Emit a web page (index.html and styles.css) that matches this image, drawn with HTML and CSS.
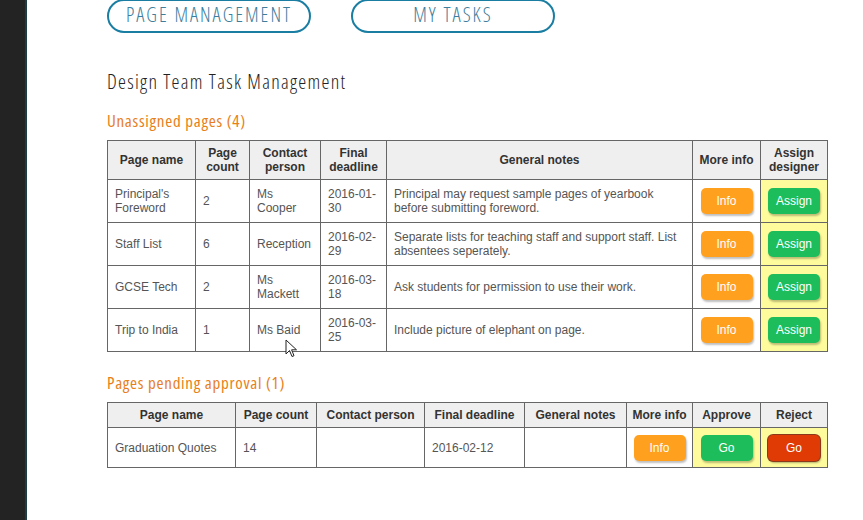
FILE: index.html
```html
<!DOCTYPE html>
<html>
<head>
<meta charset="utf-8">
<link rel="stylesheet" href="styles.css">
</head>
<body>
<div class="sidebar"></div>
<main class="main">
  <nav class="nav">
    <a class="pill">PAGE MANAGEMENT</a>
    <a class="pill">MY TASKS</a>
  </nav>
  <h1 class="title">Design Team Task Management</h1>
  <h2 class="section">Unassigned pages (4)</h2>
  <table class="grid t1">
    <colgroup>
      <col style="width:88px"><col style="width:54px"><col style="width:71px"><col style="width:66px"><col style="width:306px"><col style="width:68px"><col style="width:67px">
    </colgroup>
    <thead>
      <tr><th>Page name</th><th>Page<br>count</th><th>Contact<br>person</th><th>Final<br>deadline</th><th>General notes</th><th>More info</th><th>Assign<br>designer</th></tr>
    </thead>
    <tbody>
      <tr><td>Principal's Foreword</td><td>2</td><td>Ms Cooper</td><td>2016-01-30</td><td>Principal may request sample pages of yearbook before submitting foreword.</td><td class="c"><span class="btn info">Info</span></td><td class="c hl"><span class="btn green">Assign</span></td></tr>
      <tr><td>Staff List</td><td>6</td><td>Reception</td><td>2016-02-29</td><td>Separate lists for teaching staff and support staff. List absentees seperately.</td><td class="c"><span class="btn info">Info</span></td><td class="c hl"><span class="btn green">Assign</span></td></tr>
      <tr><td>GCSE Tech</td><td>2</td><td>Ms Mackett</td><td>2016-03-18</td><td>Ask students for permission to use their work.</td><td class="c"><span class="btn info">Info</span></td><td class="c hl"><span class="btn green">Assign</span></td></tr>
      <tr><td>Trip to India</td><td>1</td><td>Ms Baid</td><td>2016-03-25</td><td>Include picture of elephant on page.</td><td class="c"><span class="btn info">Info</span></td><td class="c hl"><span class="btn green">Assign</span></td></tr>
    </tbody>
  </table>
  <h2 class="section s2">Pages pending approval (1)</h2>
  <table class="grid t2">
    <colgroup>
      <col style="width:128px"><col style="width:81px"><col style="width:108px"><col style="width:100px"><col style="width:102px"><col style="width:66px"><col style="width:68px"><col style="width:67px">
    </colgroup>
    <thead>
      <tr><th>Page name</th><th>Page count</th><th>Contact person</th><th>Final deadline</th><th>General notes</th><th>More info</th><th>Approve</th><th>Reject</th></tr>
    </thead>
    <tbody>
      <tr><td>Graduation Quotes</td><td>14</td><td></td><td>2016-02-12</td><td></td><td class="c"><span class="btn info">Info</span></td><td class="c hl"><span class="btn green">Go</span></td><td class="c hl"><span class="btn red">Go</span></td></tr>
    </tbody>
  </table>
  <svg class="cursor" width="14" height="20" viewBox="0 0 14 20"><path d="M1 1 L1 15 L4.5 11.5 L7 17.5 L9 16.7 L6.6 10.8 L11.5 10.8 Z" fill="#fff" stroke="#222" stroke-width="1"/></svg>
</main>
</body>
</html>
```
FILE: styles.css
```css
html, body { margin: 0; padding: 0; background: #fff; }
body { display: flex; min-height: 520px; font-family: "Liberation Sans", Arial, sans-serif; }
.sidebar { width: 25px; background: #232323; border-right: 2px solid #1c3d48; flex: none; }
.main { position: relative; padding-left: 80px; flex: 1; }
.nav { display: flex; gap: 40px; }
.pill {
  box-sizing: border-box; width: 204px; height: 34px; padding-bottom: 3px;
  border: 2px solid #1a7ea3; border-radius: 17px;
  display: flex; align-items: center; justify-content: center;
  font-family: "Open Sans", Roboto, sans-serif; font-stretch: 75%; font-weight: 300;
  font-size: 20px; letter-spacing: 2px; color: #3d7e9c; white-space: nowrap;
  margin-top: -1px;
}
.title {
  margin: 37px 0 0; font-weight: 300; font-size: 20px; color: #222;
  font-family: "Open Sans", Roboto, sans-serif; font-stretch: 75%;
  letter-spacing: 1.3px; line-height: 24px; white-space: nowrap;
}
.section {
  margin: 17px 0 0; font-weight: 400; font-size: 17px; color: #e8801a;
  font-family: "Open Sans", Roboto, sans-serif; font-stretch: 75%;
  letter-spacing: 0.7px; line-height: 20px; white-space: nowrap;
}
.s2 { margin-top: 21px; }
.grid { border-collapse: collapse; table-layout: fixed; width: 720px; font-size: 12px; color: #555; margin-top: 9px; }
.grid th, .grid td { border: 1px solid #666; padding: 0 7px; line-height: 14px; }
.grid th { background: #efefef; color: #333; font-weight: bold; text-align: center; padding: 0 3px; white-space: nowrap; }
.t1 th { height: 38px; }
.t1 td { height: 42px; }
.t2 th { height: 24px; }
.t2 td { height: 39px; }
.grid td.c { text-align: center; padding: 0; }
.grid td.hl { background: #fdfb9c; }
.btn {
  display: inline-block; width: 52px; height: 26px; line-height: 26px;
  border-radius: 5px; color: #fff; font-size: 12px; text-align: center;
  box-shadow: 1px 2px 2px rgba(0,0,0,0.25); vertical-align: middle;
}
.info { background: #ffa11f; }
.green { background: #1dbd5b; }
.red { background: #e03a05; box-shadow: 0 0 0 1px #8a3a1a, 1px 2px 2px rgba(0,0,0,0.3); }
.cursor { position: absolute; left: 258px; top: 339px; }
```
